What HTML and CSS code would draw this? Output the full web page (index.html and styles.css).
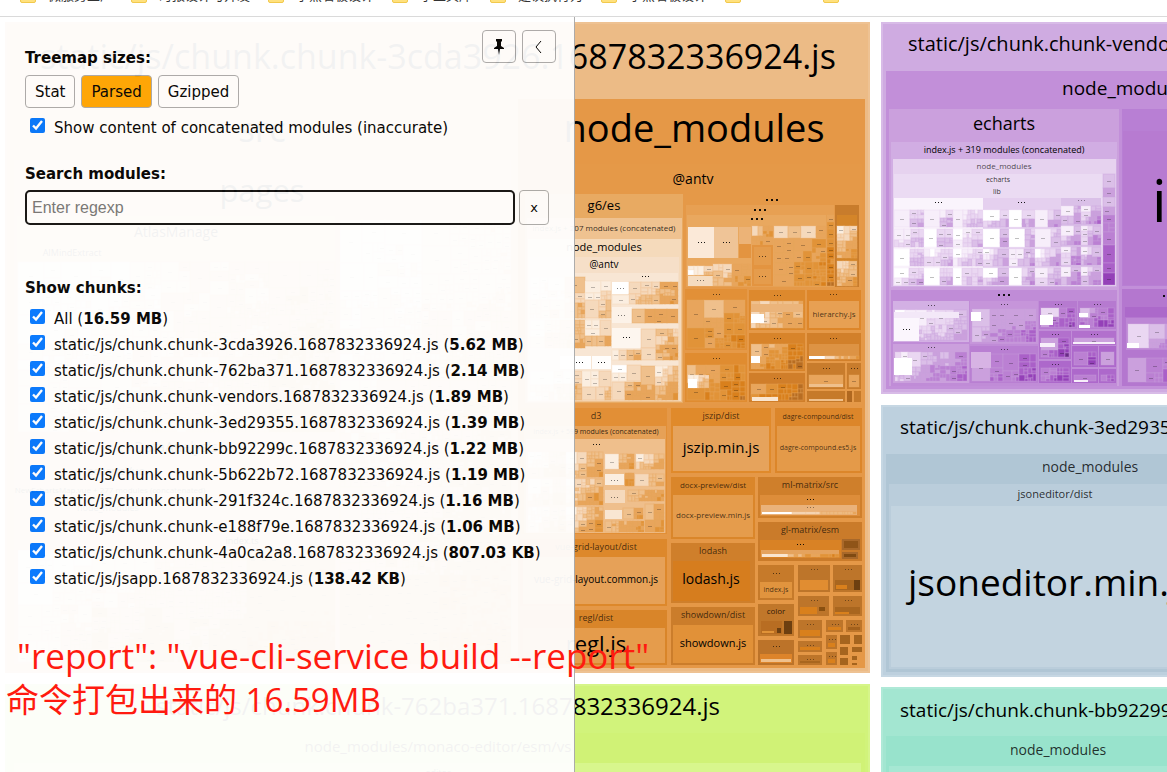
FILE: index.html
```html
<!DOCTYPE html>
<html lang="zh-CN">
<head>
    <meta charset="UTF-8">
    <meta name="viewport" content="width=device-width, initial-scale=1.0">
    <title>Webpack Bundle Analyzer</title>
    <link rel="stylesheet" href="styles.css">
</head>
<body>
    <nav class="bookmarks">
        <a href="#"><i class="folder"></i>微服务生产</a>
        <a href="#"><i class="folder"></i>时报设计与开发</a>
        <a href="#"><i class="folder"></i>小熊看板设计</a>
        <a href="#"><i class="folder"></i>小工具库</a>
        <a href="#"><i class="folder"></i>建议执行力</a>
        <a href="#"><i class="folder"></i>小熊看板设计</a>
        <a href="#" class="blank" aria-label="folder"><i class="folder"></i></a>
        <a href="#" class="blank" aria-label="folder"><i class="folder"></i></a>
    </nav>

    <main class="analyzer">
        <svg id="treemap" class="treemap" viewBox="0 17 1167 755" preserveAspectRatio="xMinYMin slice"></svg>

        <aside class="sidebar">
            <div class="sidebar-tools">
                <button type="button" class="btn tool" aria-label="Pin">
                    <svg width="12" height="18" viewBox="0 0 12 18"><path d="M3 1h6v2L8 4v4l3 2v1H7l-1 6-1-6H1v-1l3-2V4L3 3z"/></svg>
                </button>
                <button type="button" class="btn tool" aria-label="Hide">
                    <svg width="8" height="14" viewBox="0 0 8 14"><path d="M6 1L1 7l5 6" fill="none" stroke="#000"/></svg>
                </button>
            </div>

            <h2 class="heading">Treemap sizes:</h2>
            <div class="sizes">
                <button type="button" class="btn">Stat</button>
                <button type="button" class="btn active">Parsed</button>
                <button type="button" class="btn">Gzipped</button>
            </div>
            <label class="check"><input type="checkbox" checked><span>Show content of concatenated modules (inaccurate)</span></label>

            <h2 class="heading search-heading"><label for="search">Search modules:</label></h2>
            <div class="search">
                <input type="text" id="search" placeholder="Enter regexp">
                <button type="button" class="btn clear">x</button>
            </div>

            <h2 class="heading chunks-heading">Show chunks:</h2>
            <div class="chunks">
                <label class="check"><input type="checkbox" checked><span>All (<b>16.59 MB</b>)</span></label>
                <label class="check"><input type="checkbox" checked><span>static/js/chunk.chunk-3cda3926.1687832336924.js (<b>5.62 MB</b>)</span></label>
                <label class="check"><input type="checkbox" checked><span>static/js/chunk.chunk-762ba371.1687832336924.js (<b>2.14 MB</b>)</span></label>
                <label class="check"><input type="checkbox" checked><span>static/js/chunk.chunk-vendors.1687832336924.js (<b>1.89 MB</b>)</span></label>
                <label class="check"><input type="checkbox" checked><span>static/js/chunk.chunk-3ed29355.1687832336924.js (<b>1.39 MB</b>)</span></label>
                <label class="check"><input type="checkbox" checked><span>static/js/chunk.chunk-bb92299c.1687832336924.js (<b>1.22 MB</b>)</span></label>
                <label class="check"><input type="checkbox" checked><span>static/js/chunk.chunk-5b622b72.1687832336924.js (<b>1.19 MB</b>)</span></label>
                <label class="check"><input type="checkbox" checked><span>static/js/chunk.chunk-291f324c.1687832336924.js (<b>1.16 MB</b>)</span></label>
                <label class="check"><input type="checkbox" checked><span>static/js/chunk.chunk-e188f79e.1687832336924.js (<b>1.06 MB</b>)</span></label>
                <label class="check"><input type="checkbox" checked><span>static/js/chunk.chunk-4a0ca2a8.1687832336924.js (<b>807.03 KB</b>)</span></label>
                <label class="check"><input type="checkbox" checked><span>static/js/jsapp.1687832336924.js (<b>138.42 KB</b>)</span></label>
            </div>
        </aside>

        <div class="note">
            <p class="note-command">"report": "vue-cli-service build --report"</p>
            <p>命令打包出来的 16.59MB</p>
        </div>
    </main>
    <script src="treemap.js"></script>
</body>
</html>
```
FILE: styles.css
```css
* {
    box-sizing: border-box;
}
body {
    margin: 0;
    height: 100vh;
    display: flex;
    flex-direction: column;
    overflow: hidden;
    background: #fff;
    font-family: "DejaVu Sans", Verdana, sans-serif;
}

/* bookmarks bar */
.bookmarks {
    flex: none;
    display: flex;
    align-items: flex-end;
    gap: 18px;
    height: 17px;
    padding: 0 20px 13px;
    border-bottom: 1px solid #dadada;
    overflow: hidden;
}
.bookmarks a {
    display: flex;
    align-items: flex-end;
    gap: 12px;
    flex: none;
    color: #333;
    font: 13px/16px "Noto Sans CJK SC", sans-serif;
    text-decoration: none;
}
.bookmarks .blank {
    width: 80px;
}
.folder {
    width: 16px;
    height: 13px;
    background: #ffe17e;
    border: 1px solid #f2c94c;
    border-radius: 2px;
}

/* treemap */
.analyzer {
    position: relative;
    flex: 1;
    min-height: 0;
}
.treemap {
    display: block;
    width: 100%;
    height: 100%;
}
.treemap text {
    font-family: "Open Sans", "Segoe UI", sans-serif;
    fill: #000;
}

/* sidebar lies over the treemap */
.sidebar {
    position: absolute;
    top: 0;
    left: 0;
    bottom: 0;
    width: 575px;
    padding: 31px 25px 0;
    background: #fff;
    border-right: 1px solid #aaa;
    opacity: 0.95;
    font-size: 15px;
}
.sidebar-tools {
    position: absolute;
    top: 13px;
    right: 18px;
    display: flex;
    gap: 6px;
}
.heading {
    margin: 0;
    font-size: 15px;
    line-height: 20px;
}
.btn {
    height: 33px;
    padding: 0 9px;
    border: 1px solid #aaa;
    border-radius: 4px;
    background: none;
    color: #000;
    font: 15px "DejaVu Sans", Verdana, sans-serif;
    cursor: pointer;
}
.btn.active {
    background: #ffa500;
}
.btn.tool {
    display: flex;
    align-items: center;
    justify-content: center;
    width: 34px;
    padding: 0;
}
.sizes {
    display: flex;
    gap: 6px;
    margin: 7px 0;
}
.check {
    display: flex;
    align-items: flex-start;
    gap: 9px;
    height: 26px;
    padding-left: 5px;
    line-height: 26px;
    white-space: nowrap;
}
.check input {
    width: 15px;
    height: 15px;
    margin: 3px 0 0;
    accent-color: #0075ff;
}
.search-heading {
    margin-top: 23px;
}
.search {
    display: flex;
    gap: 4px;
    margin-top: 6px;
}
.search input {
    width: 490px;
    height: 35px;
    padding: 0 5px;
    border: 2px solid #101010;
    border-radius: 5px;
    background: none;
    font: 16px "Liberation Sans", Arial, sans-serif;
}
.search input::placeholder {
    color: #757575;
}
.btn.clear {
    width: 30px;
    height: 35px;
    padding: 0;
    font-size: 13px;
}
.chunks-heading {
    margin-top: 53px;
}
.chunks {
    margin-top: 8px;
}

/* red remark on top of everything */
.note {
    position: absolute;
    left: 6px;
    top: 617px;
    color: #ff1a0f;
    font: 33px/44px "Open Sans", "Noto Sans CJK SC", sans-serif;
    white-space: nowrap;
}
.note p {
    margin: 0;
}
.note .note-command {
    padding-left: 11px;
    font-size: 35px;
}
```
FILE: treemap.js
```js
const svg = document.getElementById("treemap");
const NS = "http://www.w3.org/2000/svg";

// colour ramps, from light to dark
const ORANGE = ["#ffffff", "#fbeee0", "#f5d9bc", "#efc08c", "#e8a55c", "#e19338", "#d9801c", "#b86d22", "#8a5010"];
const PURPLE = ["#ffffff", "#f7eefa", "#ead7f2", "#dbbfe8", "#cba0dd", "#bb80d3", "#aa60c8", "#9440b8", "#6a2a88"];

let seed = 7;
function random() {
    seed = (seed * 16807) % 2147483647;
    return seed / 2147483647;
}

function add(name, attrs, text) {
    const el = document.createElementNS(NS, name);
    for (const key in attrs) {
        el.setAttribute(key, attrs[key]);
    }
    if (text) {
        el.textContent = text;
    }
    svg.appendChild(el);
}

// box by its left, top, right and bottom edges
function box(x1, y1, x2, y2, fill, stroke) {
    const attrs = { x: x1, y: y1, width: x2 - x1, height: y2 - y1, fill: fill };
    if (stroke) {
        attrs.stroke = stroke;
        attrs["stroke-width"] = 2;
        attrs.x += 1;
        attrs.y += 1;
        attrs.width -= 2;
        attrs.height -= 2;
    }
    add("rect", attrs);
}

function label(x, y, size, text, anchor, opacity) {
    add("text", { x: x, y: y, "font-size": size, "text-anchor": anchor || "middle", "fill-opacity": opacity || 1 }, text);
}

function dots(x, y, s, opacity) {
    const step = s > 1 ? 5 : 3;
    for (let i = -1; i <= 1; i++) {
        add("rect", { x: Math.round(x) + i * step, y: y, width: s, height: s > 1 ? 2 : 1, fill: "#000", "fill-opacity": opacity || 0.9 });
    }
}

// small modules: the big ones first and light, the rest smaller and darker
function cells(x1, y1, x2, y2, ramp, from, to, min) {
    const w = x2 - x1;
    const h = y2 - y1;
    if (w < 2 || h < 2) {
        return;
    }
    const long = Math.max(w, h);
    if (long <= min || (long <= min * 2 && random() < 0.4)) {
        const tone = Math.max(0, Math.min(8, Math.round(from + random() * 0.9 - 0.3)));
        add("rect", { x: x1, y: y1, width: w, height: h, fill: ramp[tone], stroke: ramp[Math.min(tone + 1, 4)], "stroke-width": 1, "stroke-opacity": 0.4 });
        if (w > 6 && h > 4) {
            add("rect", { x: Math.round(x1 + w / 2) - 2, y: Math.round(y1 + h / 2), width: 4, height: 1, fill: "#000", "fill-opacity": 0.25 });
        }
        return;
    }
    const part = 0.45 + random() * 0.2;
    const low = from + (to - from) * 0.2;
    const high = from + (to - from) * 0.45;
    if (w > h) {
        const cut = Math.round(x1 + w * part);
        cells(x1, y1, cut, y2, ramp, from, Math.max(low, to - 1), min);
        cells(cut, y1, x2, y2, ramp, high, to, Math.max(4, min * 0.75));
    } else {
        const cut = Math.round(y1 + h * part);
        cells(x1, y1, x2, cut, ramp, from, Math.max(low, to - 1), min);
        cells(x1, cut, x2, y2, ramp, high, to, Math.max(4, min * 0.75));
    }
}

// several groups of modules in a grid, each one starting light again
function grid(x1, y1, x2, y2, cols, rows, ramp, from, to, min) {
    const w = (x2 - x1) / cols;
    const h = (y2 - y1) / rows;
    for (let r = 0; r < rows; r++) {
        for (let c = 0; c < cols; c++) {
            const left = Math.round(x1 + c * w);
            const top = Math.round(y1 + r * h);
            cells(left, top + 2, Math.round(x1 + (c + 1) * w), Math.round(y1 + (r + 1) * h), ramp, from, to, min);
        }
    }
}

// framed group: a header strip with dots, then its modules
function group(x1, y1, x2, y2, frame, header, ramp, from, to, min) {
    box(x1, y1, x2, y2, frame);
    cells(x1 + 2, y1 + header, x2 - 2, y2 - 2, ramp, from, to, min);
    if (header > 6) {
        dots((x1 + x2) / 2, y1 + Math.round(header / 2) - 1, 1, 0.6);
    }
}

// ---- chunk 3cda3926
box(5, 22, 870, 673, "#ecbb86", "#eec293");
label(438, 69, 34, "static/js/chunk.chunk-3cda3926.1687832336924.js");

box(10, 99, 515, 668, "#ecb882");
label(262, 142, 35, "src");
box(14, 160, 511, 664, "#efbf8c");
label(262, 202, 31, "pages");
box(17, 216, 335, 433, "#f0c596");
label(176, 237, 14, "AtlasManage");
label(72, 256, 9, "AIMindExtract");
cells(18, 262, 335, 432, ORANGE, 1, 4, 30);
cells(340, 220, 511, 664, ORANGE, 1, 5, 26);
box(17, 436, 335, 530, "#efbf8c");
label(176, 452, 14, "DataAnalysis");
label(116, 475, 11, "echartsVue");
label(110, 493, 8, "NewEchartsMap.vue + 277 modules (concatenated)");
label(108, 511, 9, "node_modules");
label(242, 544, 9, "index.ts");
cells(18, 550, 335, 662, ORANGE, 1, 5, 24);

box(518, 99, 865, 668, "#e59847");
label(694, 142, 38, "node_modules");
box(522, 164, 862, 404, "#e59948");
label(693, 184, 14, "@antv");

box(525, 194, 683, 403, "#e8aa62");
label(604, 210, 13, "g6/es");
box(527, 218, 682, 402, "#efc290");
label(604, 231, 8, "index.js + 207 modules (concatenated)", "middle", 0.8);
box(528, 239, 681, 401, "#f5dabb");
label(604, 251, 11, "node_modules");
box(529, 257, 679, 400, "#f6dfc8");
label(604, 268, 10, "@antv");
box(530, 273, 678, 400, "#f8e6d4");
cells(530, 277, 585, 318, ORANGE, 1, 3.5, 14);
cells(585, 281, 611, 318, ORANGE, 0.8, 3.2, 14);
cells(530, 320, 585, 348, ORANGE, 1, 4, 12);
cells(585, 320, 611, 346, ORANGE, 0.8, 4.2, 11);
box(560, 356, 591, 369, "#fff");
box(592, 356, 611, 369, "#fffdfb");
dots(579, 362, 1);
dots(601, 362, 1);
cells(530, 371, 582, 400, ORANGE, 0, 3.5, 12);
cells(582, 371, 611, 400, ORANGE, 1, 3, 12);
box(612, 282, 629, 294, "#fff");
dots(620, 288, 1, 0.5);
cells(629, 282, 641, 304, ORANGE, 1.5, 2.5, 10);
cells(612, 295, 629, 304, ORANGE, 1, 1.5, 17);
cells(641, 282, 678, 304, ORANGE, 2, 4.4, 9);
box(612, 307, 632, 323, "#fcf2e8");
dots(621, 315, 1, 0.5);
cells(632, 309, 678, 323, ORANGE, 2.6, 4.6, 13);
box(612, 328, 641, 348, "#fdf6ef");
cells(641, 329, 656, 360, ORANGE, 1.4, 2.5, 11);
cells(656, 329, 678, 360, ORANGE, 2, 4.4, 6);
cells(612, 350, 641, 360, ORANGE, 1, 4, 14);
cells(612, 365, 627, 381, ORANGE, 0.2, 0.5, 15);
cells(627, 365, 641, 381, ORANGE, 1.6, 3, 11);
cells(612, 382, 641, 400, ORANGE, 2, 4, 9);
cells(641, 366, 655, 400, ORANGE, 3, 4.4, 13);
cells(655, 366, 678, 400, ORANGE, 1.2, 4.8, 6);
dots(626, 337, 1);
dots(645, 276, 1);

box(686, 205, 834, 287, "#e7a053");
box(687, 215, 826, 286, "#e9a85f");
dots(771, 199, 2);
dots(759, 209, 2);
dots(756, 218, 2);
box(688, 227, 714, 258, "#fbe9d8");
box(714, 227, 738, 258, "#efc497");
box(739, 227, 751, 244, "#ecb377");
box(739, 244, 751, 258, "#e39440");
dots(701, 242, 1);
dots(726, 242, 1);
cells(688, 266, 704, 275, ORANGE, 0, 0.8, 8);
cells(704, 266, 713, 275, ORANGE, 2, 3.5, 5);
box(688, 276, 713, 286, "#f5dcc0");
dots(700, 280, 1, 0.5);
cells(713, 264, 751, 286, ORANGE, 2, 5, 9);
cells(752, 226, 773, 245, ORANGE, 2.5, 5.5, 9);
box(752, 245, 773, 267, "#e59c4c", "#e39440");
box(752, 267, 773, 286, "#e59c4c", "#e39440");
dots(762, 256, 1, 0.6);
dots(762, 276, 1, 0.6);
cells(774, 226, 788, 238, ORANGE, 2, 2.2, 15);
cells(788, 226, 801, 238, ORANGE, 3.4, 5, 9);
cells(801, 226, 826, 238, ORANGE, 2, 5.5, 12);
cells(774, 239, 794, 286, ORANGE, 3.7, 4.6, 18);
cells(794, 239, 826, 286, ORANGE, 4.3, 5.2, 11);
cells(827, 215, 834, 286, ORANGE, 4.3, 7, 9);
box(835, 205, 859, 287, "#d48529", "#c87c2c");
box(836, 206, 858, 215, "#c87c2c");
cells(837, 226, 857, 258, ORANGE, 0.8, 5, 5);
cells(837, 261, 857, 286, ORANGE, 1.8, 5, 5);

group(685, 289, 747, 350, "#e29037", 11, ORANGE, 3.7, 5.7, 15);
group(685, 353, 747, 402, "#e08c30", 12, ORANGE, 3.4, 6.5, 12);
cells(688, 375, 709, 388, ORANGE, 1, 3.5, 8);
box(688, 379, 697, 388, "#fff");
group(749, 290, 805, 330, "#dd892d", 11, ORANGE, 2, 4.6, 12);
box(751, 304, 803, 312, "#ebb47a");
box(751, 314, 764, 323, "#fff");
group(749, 333, 805, 371, "#d8842a", 11, ORANGE, 2, 7, 8);
box(751, 356, 760, 363, "#fff");
group(749, 373, 805, 402, "#d07e2a", 11, ORANGE, 4.4, 7.5, 12);
box(752, 397, 778, 401, "#fae6d0");
box(807, 290, 861, 330, "#dd862a");
box(809, 301, 859, 328, "#e7a053");
dots(833, 294, 1, 0.6);
label(834, 317, 8, "hierarchy.js", "middle", 0.7);
box(807, 333, 861, 361, "#d2802a");
box(809, 344, 859, 359, "#dd9344");
box(809, 356, 825, 359, "#fff");
cells(825, 356, 859, 359, ORANGE, 2, 5, 7);
dots(833, 338, 1, 0.6);
group(807, 363, 845, 389, "#c87c2c", 12, ORANGE, 4, 5, 40);
box(809, 384, 843, 387, "#efc08c");
group(847, 363, 861, 389, "#c87c2c", 12, ORANGE, 4, 5, 20);
box(807, 391, 845, 402, "#c67a2a");
box(809, 399, 843, 401, "#efc08c");
box(847, 391, 852, 402, "#b06820");
box(854, 391, 861, 402, "#c67a2a");

box(520, 408, 667, 534, "#e28f36");
label(596, 419, 9, "d3", "middle", 0.7);
box(524, 426, 666, 533, "#e6a157");
label(596, 434, 7, "index.js + 599 modules (concatenated)", "middle", 0.8);
box(526, 439, 665, 533, "#efbf8c");
dots(596, 444, 1);
grid(528, 450, 603, 532, 2, 3, ORANGE, 1, 4.8, 8);
cells(605, 454, 634, 469, ORANGE, 0.8, 5, 8);
cells(636, 454, 664, 469, ORANGE, 1.3, 4.6, 6);
box(605, 474, 624, 485, "#fbeee0");
dots(614, 480, 1, 0.5);
cells(625, 473, 634, 486, ORANGE, 4, 5, 5);
cells(635, 474, 664, 486, ORANGE, 1.8, 4, 9);
box(605, 490, 625, 503, "#f5d9bc");
dots(614, 497, 1, 0.5);
cells(628, 490, 664, 501, ORANGE, 2.4, 4.8, 7);
box(605, 510, 622, 519, "#f9e6d2");
cells(623, 508, 643, 519, ORANGE, 3, 4.8, 6);
cells(645, 504, 664, 532, ORANGE, 3.3, 4.8, 8);
cells(605, 521, 644, 532, ORANGE, 3, 5, 6);

box(520, 539, 667, 606, "#dd882b");
box(523, 557, 665, 604, "#e6a158");
label(596, 550, 9, "vue-grid-layout/dist", "middle", 0.7);
label(596, 583, 10, "vue-grid-layout.common.js");
box(520, 610, 667, 665, "#d98529");
box(523, 628, 665, 663, "#e59c4c");
label(596, 621, 9, "regl/dist", "middle", 0.7);
label(596, 652, 22, "regl.js");

box(671, 408, 771, 473, "#e08a2b");
box(673, 426, 769, 471, "#e6a35c");
label(721, 419, 9, "jszip/dist", "middle", 0.7);
label(721, 453, 15, "jszip.min.js");
box(775, 408, 862, 473, "#dc862a");
box(777, 426, 860, 471, "#e49a49");
label(818, 419, 7, "dagre-compound/dist", "middle", 0.7);
label(818, 450, 7, "dagre-compound.es5.js", "middle", 0.7);
box(671, 477, 755, 539, "#da862a");
box(673, 495, 753, 537, "#e59c4c");
label(713, 488, 8, "docx-preview/dist", "middle", 0.7);
label(713, 518, 8, "docx-preview.min.js", "middle", 0.7);
box(671, 543, 755, 603, "#cf7f2b");
box(673, 561, 750, 601, "#d67d1e");
label(713, 554, 9, "lodash", "middle", 0.7);
label(711, 584, 14, "lodash.js");
box(671, 607, 755, 665, "#cb7d2b");
box(673, 625, 753, 663, "#e19138");
label(713, 618, 9, "showdown/dist", "middle", 0.7);
label(713, 647, 11, "showdown.js");

box(758, 477, 862, 518, "#cf7f2b");
label(810, 488, 9, "ml-matrix/src", "middle", 0.7);
box(760, 495, 860, 516, "#dd8d3a");
dots(810, 499, 1);
box(761, 505, 857, 515, "#eab27a");
box(762, 512, 792, 514, "#fff");
cells(792, 512, 856, 514, ORANGE, 2, 3.5, 8);
dots(810, 507, 1, 0.4);
box(758, 522, 862, 561, "#ca7b2a");
label(810, 533, 9, "gl-matrix/esm", "middle", 0.7);
box(760, 540, 841, 558, "#d98225");
dots(800, 544, 1);
box(761, 550, 839, 557, "#e5a35e");
box(762, 554, 788, 557, "#fae6d0");
cells(788, 554, 839, 557, ORANGE, 2.5, 6, 9);
box(842, 539, 860, 550, "#8f5418", "#a8682a");
box(842, 552, 858, 559, "#804a12", "#a8682a");

box(758, 565, 794, 600, "#c67a2a");
box(760, 582, 792, 598, "#e1943e");
dots(776, 573, 1, 0.6);
label(776, 592, 7, "index.js", "middle", 0.7);
box(758, 604, 794, 636, "#c0772a");
label(776, 614, 8, "color", "middle", 0.8);
box(761, 621, 782, 634, "#b86d22");
box(762, 631, 774, 633, "#e19338");
box(777, 628, 781, 633, "#6d3f10");
box(784, 621, 792, 634, "#6d3f10");
box(758, 640, 794, 665, "#bc7329");
dots(776, 646, 1, 0.6);
box(760, 654, 792, 663, "#dd842a");
box(761, 659, 791, 662, "#efc08c");

// small packages: outer box, then its inner file
const SMALL = [
    [798, 565, 830, 592, "#e18d31"], [833, 565, 862, 592, "#a9661f"],
    [798, 596, 829, 616, "#d9801c"], [833, 596, 862, 616, "#a9661f"],
    [798, 620, 822, 638, "#d9801c"], [826, 620, 843, 632, "#d9801c"],
    [846, 620, 862, 632, "#a4611c"], [798, 641, 822, 652, "#d9801c"],
    [798, 655, 822, 665, "#a9661f"], [826, 635, 837, 649, "#d9801c"],
    [826, 652, 837, 665, "#d9801c"]
];
SMALL.forEach(([x1, y1, x2, y2, inner]) => {
    const half = Math.round(y1 + (y2 - y1) * 0.55);
    box(x1, y1, x2, y2, "#bd752a");
    box(x1 + 2, half, x2 - 2, y2 - 2, inner);
    dots((x1 + x2) / 2, y1 + 4, 1, 0.4);
});
box(836, 585, 847, 589, "#d9801c");
box(854, 580, 860, 590, "#6d3f10");
box(835, 612, 849, 614, "#d9801c");
box(817, 606, 827, 614, "#bd752a");
box(819, 607, 825, 611, "#8a5010");
[[840, 635, 850, 644], [854, 635, 862, 644], [840, 647, 848, 655], [852, 647, 862, 652],
 [840, 658, 848, 665], [852, 656, 857, 660], [852, 663, 857, 665]].forEach(([x1, y1, x2, y2]) => {
    box(x1, y1, x2, y2, "#a5641e");
});

// ---- chunk 762ba371
box(5, 684, 870, 790, "#d1f37b", "#d6f58a");
box(10, 733, 865, 790, "#d0f276");
label(438, 715, 24, "static/js/chunk.chunk-762ba371.1687832336924.js");
label(438, 752, 15, "node_modules/monaco-editor/esm/vs");
box(14, 763, 861, 790, "#d8f68d");
label(438, 776, 9, "editor");

// ---- vendors
box(881, 22, 1190, 394, "#cfabe1", "#d8bbe7");
label(908, 51, 20, "static/js/chunk.chunk-vendors.1687832336924.js", "start");
box(886, 71, 1190, 389, "#c28fd9");
label(1062, 95, 19, "node_modules", "start");
box(889, 109, 1119, 386, "#cba0dd");
label(1004, 130, 18, "echarts");
box(891, 142, 1117, 287, "#d1ade3");
label(1004, 153, 9, "index.js + 319 modules (concatenated)");
box(893, 159, 1116, 286, "#e6d2ef");
label(1004, 169, 8, "node_modules", "middle", 0.7);
box(894, 174, 1103, 286, "#ebdbf3");
label(998, 182, 7, "echarts", "middle", 0.8);
label(997, 194, 7, "lib", "middle", 0.8);
box(894, 198, 983, 285, "#faf4fc");
box(983, 198, 1061, 285, "#e5d0ef");
box(1061, 198, 1101, 285, "#dac0e8");
dots(938, 202, 1);
dots(1021, 202, 1);
dots(1081, 200, 1, 0.4);
grid(894, 208, 983, 285, 3, 4, PURPLE, 0.2, 3.6, 9);
grid(983, 208, 1061, 285, 3, 4, PURPLE, 0.2, 4.6, 9);
grid(1061, 204, 1101, 285, 2, 4, PURPLE, 0.8, 5.6, 7);
cells(1103, 174, 1115, 215, PURPLE, 3.2, 3.8, 16);
cells(1103, 215, 1115, 245, PURPLE, 4.5, 5.5, 14);
cells(1103, 245, 1115, 285, PURPLE, 5.5, 7.4, 12);

box(891, 290, 1117, 386, "#c08cd7");
dots(1003, 294, 2);
group(893, 301, 969, 342, "#d3b0e4", 9, PURPLE, 0, 4, 12);
box(894, 312, 959, 318, "#f3e8f8");
box(894, 318, 919, 341, "#fbf6fd");
dots(906, 329, 1);
group(893, 344, 969, 383, "#cba0dd", 8, PURPLE, 1, 6, 11);
box(894, 358, 912, 375, "#fff");
group(970, 301, 1038, 344, "#c695da", 8, PURPLE, 2.2, 6, 13);
box(971, 312, 981, 321, "#fff");
group(970, 346, 1038, 383, "#b97fd2", 8, PURPLE, 4, 6.6, 14);
box(971, 352, 991, 368, "#d7b3e4");
group(1039, 301, 1077, 329, "#b67ad0", 7, PURPLE, 2, 7.5, 9);
box(1040, 315, 1053, 325, "#fff");
group(1078, 301, 1116, 329, "#b67ad0", 7, PURPLE, 3, 7.5, 8);
box(1079, 313, 1088, 317, "#fff");
box(1079, 325, 1090, 328, "#fff");
group(1039, 331, 1071, 359, "#b270cd", 7, PURPLE, 4, 7.5, 11);
box(1040, 343, 1055, 347, "#f7eefa");
group(1072, 331, 1116, 345, "#b270cd", 7, PURPLE, 4.3, 5, 50);
box(1073, 342, 1115, 344, "#f7eefa");
group(1072, 346, 1098, 367, "#ad68cb", 6, PURPLE, 5, 8, 9);
group(1099, 346, 1116, 367, "#ad68cb", 6, PURPLE, 4.6, 7, 9);
group(1039, 361, 1071, 383, "#ad68cb", 7, PURPLE, 4.4, 7.5, 7);
group(1072, 369, 1098, 383, "#ad68cb", 6, PURPLE, 4.6, 6, 24);
box(1074, 380, 1088, 382, "#f7eefa");
group(1099, 369, 1116, 383, "#ad68cb", 6, PURPLE, 4.6, 7, 6);

box(1122, 109, 1190, 286, "#b87fd4");
box(1123, 131, 1190, 285, "#b77bd1");
label(1152, 222, 58, "index.js", "start");
box(1122, 289, 1190, 386, "#b477cf");
box(1125, 307, 1190, 317, "#ac69ca");
group(1126, 318, 1190, 350, "#bd87d5", 6, PURPLE, 1.4, 6, 12);
box(1127, 343, 1139, 348, "#fff");
group(1126, 352, 1190, 384, "#b477cf", 6, PURPLE, 3.6, 6.5, 14);
dots(1168, 295, 2);

// ---- chunk 3ed29355
box(881, 405, 1190, 677, "#bdd0de", "#c6d7e3");
label(900, 434, 19, "static/js/chunk.chunk-3ed29355.1687832336924.js", "start");
box(886, 454, 1190, 672, "#b0c6d5");
label(1042, 472, 14, "node_modules", "start", 0.8);
box(889, 484, 1190, 669, "#bacddb");
label(1055, 498, 11, "jsoneditor/dist", "middle", 0.8);
box(891, 506, 1190, 667, "#c3d4e0");
label(908, 596, 37, "jsoneditor.min.js", "start");

// ---- chunk bb92299c
box(881, 687, 1190, 790, "#a3e6d1", "#afe9d7");
label(900, 717, 19, "static/js/chunk.chunk-bb92299c.1687832336924.js", "start");
box(886, 736, 1190, 790, "#98e3cc");
label(1010, 755, 14, "node_modules", "start", 0.8);
box(889, 766, 1190, 790, "#a6e7d3");
label(1060, 780, 11, "fluent-editor/dist", "middle", 0.8);
```
